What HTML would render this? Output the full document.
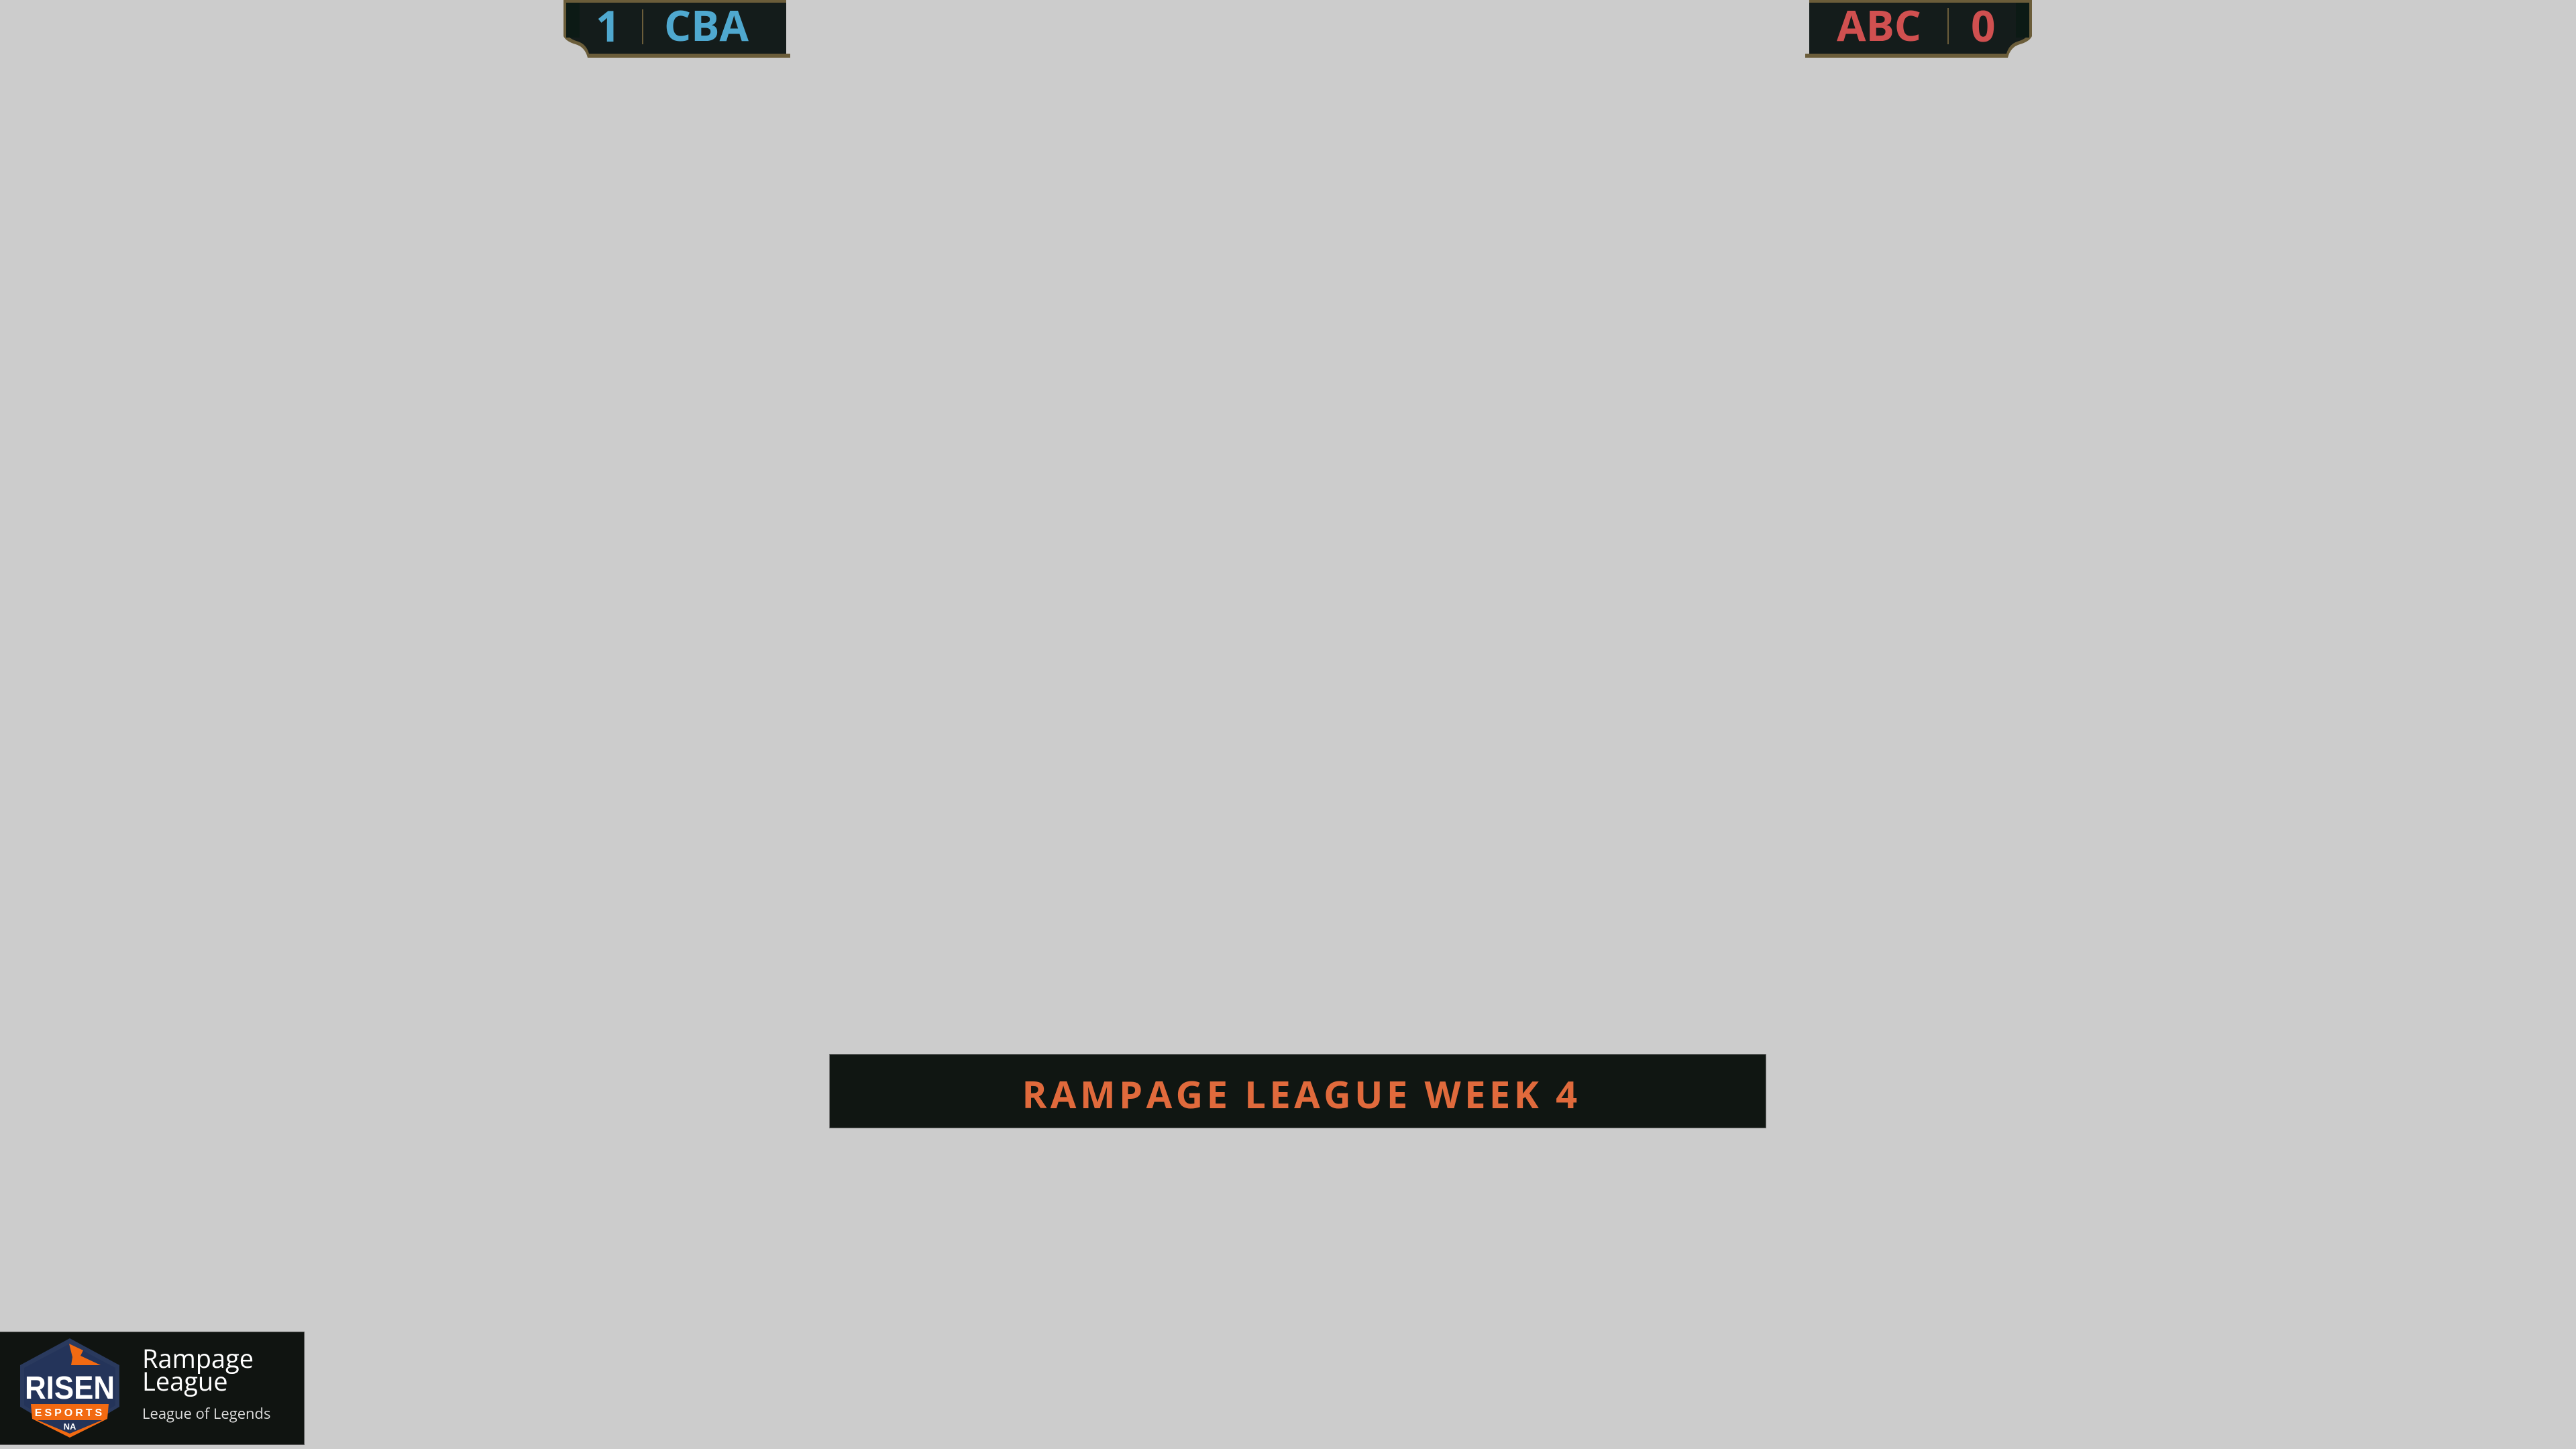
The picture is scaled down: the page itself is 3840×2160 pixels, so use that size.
<!DOCTYPE html>
<html><head><meta charset="utf-8"><style>
html,body{margin:0;padding:0}
body{width:3840px;height:2160px;background:#cccccc;position:relative;overflow:hidden;font-family:"Open Sans","Liberation Sans","DejaVu Sans",sans-serif}
.abs{position:absolute}
.t{font-weight:bold;line-height:1;white-space:nowrap}
</style></head><body>

<!-- left score box -->
<svg class="abs" style="left:836px;top:0" width="350" height="90" viewBox="0 0 350 90">
  <path d="M4 0 H336 V80 H342 V86 H40 Q36 70 22 66 Q8 62 4 54 Z" fill="#6b5d3a"/>
  <path d="M8 0 H336 V80 H42 Q38 66 26 62 Q12 58 8 50 Z" fill="#141c1b"/>
  <rect x="8" y="0" width="20" height="56" fill="#0c1a15"/>
  <rect x="8" y="0" width="328" height="4" fill="#6b5d3a"/>
  <rect x="121" y="14" width="2" height="52" fill="#6b5d3a"/>
</svg>
<div class="abs t" style="left:888px;top:6px;font-size:64px;color:#4fa8cf">1</div>
<div class="abs t" style="left:990px;top:6px;font-size:63px;color:#4fa8cf">CBA</div>

<!-- right score box -->
<svg class="abs" style="left:2683px;top:0" width="350" height="90" viewBox="0 0 350 90">
  <g transform="translate(350,0) scale(-1,1)">
  <path d="M4 0 H336 V80 H342 V86 H40 Q36 70 22 66 Q8 62 4 54 Z" fill="#6b5d3a"/>
  <path d="M8 0 H336 V80 H42 Q38 66 26 62 Q12 58 8 50 Z" fill="#141c1b"/>
  <rect x="8" y="0" width="20" height="56" fill="#0c1a15"/>
  <rect x="8" y="0" width="328" height="4" fill="#6b5d3a"/>
  <rect x="128" y="12" width="2" height="54" fill="#6b5d3a"/>
  </g>
</svg>
<div class="abs t" style="left:2738px;top:6px;font-size:63px;color:#d05050">ABC</div>
<div class="abs t" style="left:2938px;top:6px;font-size:64px;color:#d05050">0</div>

<!-- bottom banner -->
<div class="abs" style="left:1236px;top:1571px;width:1395px;height:109px;background:#101612;border:1px solid #777"></div>
<div class="abs t" style="left:1242px;top:1603px;width:1396px;text-align:center;font-size:56px;letter-spacing:5.4px;color:#e06a3c">RAMPAGE LEAGUE WEEK 4</div>

<!-- logo box -->
<div class="abs" style="left:0;top:1985px;width:453px;height:167px;background:#101411;border:1px solid #555;border-left:none"></div>
<svg class="abs" style="left:26px;top:1993px" width="156" height="150" viewBox="0 0 156 150">
  <polygon points="78,2 152,42 152,104 78,148 4,104 4,42" fill="#2a3a5e"/>
  <polygon points="78,10 146,46 146,102 78,142 10,102 10,46" fill="#24345a"/>
  <polygon points="77,10 98,20 94,28 124,42 80,42 82,30" fill="#f26a12"/>
  <text x="78" y="92" text-anchor="middle" font-family="Liberation Sans, sans-serif" font-weight="bold" font-size="48" fill="#fff" textLength="134" lengthAdjust="spacingAndGlyphs">RISEN</text>
  <polygon points="20,100 136,100 134,122 22,122" fill="#f26a12"/>
  <text x="78" y="118" text-anchor="middle" font-family="Liberation Sans, sans-serif" font-weight="bold" font-size="16" fill="#fff" letter-spacing="4">ESPORTS</text>
  <polygon points="22,122 134,122 78,150" fill="#f26a12"/>
  <polygon points="30,124 126,124 78,144" fill="#24345a"/>
  <text x="78" y="138" text-anchor="middle" font-family="Liberation Sans, sans-serif" font-weight="bold" font-size="13" fill="#fff">NA</text>
</svg>
<div class="abs" style="left:212px;top:2008px;font-size:38px;line-height:34px;color:#fff">Rampage<br>League</div>
<div class="abs" style="left:212px;top:2092px;font-size:22px;color:#ddd">League of Legends</div>

</body></html>
